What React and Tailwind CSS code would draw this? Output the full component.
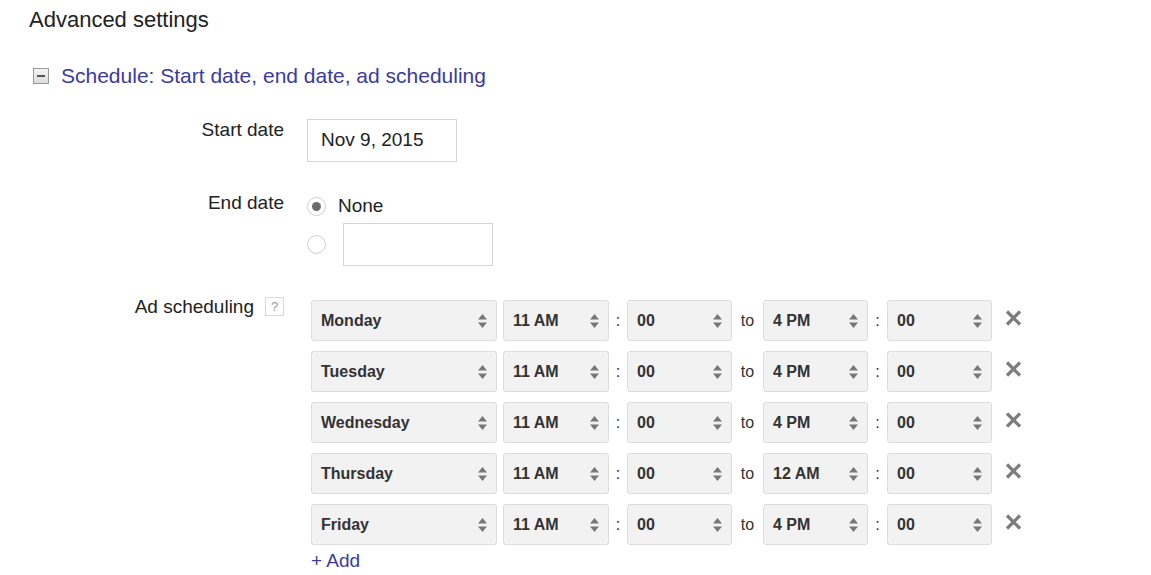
import React from "react";

const font = { fontFamily: '"Liberation Sans", Arial, Helvetica, sans-serif' };

function Arrows() {
  return (
    <svg width="11" height="16" viewBox="0 0 11 16" className="shrink-0">
      <path d="M1 6.5 L5.5 1 L10 6.5 Z" fill="#777" />
      <path d="M1 9.5 L5.5 15 L10 9.5 Z" fill="#777" />
    </svg>
  );
}

function Select({ value, w }) {
  return (
    <div
      className={`${w} h-[41px] shrink-0 flex items-center justify-between pl-[9px] pr-[8px] bg-[#f2f2f2] border border-[#dcdcdc] rounded-[3px] text-[16px] font-bold text-[#333]`}
    >
      <span>{value}</span>
      <Arrows />
    </div>
  );
}

function Colon({ w }) {
  return (
    <div className={`shrink-0 flex items-center justify-center text-[16px] text-[#333] ${w}`}>:</div>
  );
}

function XIcon() {
  return (
    <svg width="17" height="16" viewBox="0 0 17 16" className="shrink-0">
      <path d="M2 1.5 L15 14.5 M15 1.5 L2 14.5" stroke="#7d7d7d" strokeWidth="3.2" />
    </svg>
  );
}

function Row({ day, from, to }) {
  return (
    <div className="flex items-center">
      <Select value={day} w="w-[186px]" />
      <div className="w-[6px] shrink-0" />
      <Select value={from} w="w-[106px]" />
      <Colon w="w-[18px]" />
      <Select value="00" w="w-[105px]" />
      <div className="w-[31px] shrink-0 flex justify-center text-[16px] text-[#333]">to</div>
      <Select value={to} w="w-[105px]" />
      <Colon w="w-[19px]" />
      <Select value="00" w="w-[105px]" />
      <div className="ml-[13px] -mt-[5px]">
        <XIcon />
      </div>
    </div>
  );
}

function Radio({ checked }) {
  return (
    <div className="w-[19px] h-[19px] rounded-full border border-[#cfcfcf] bg-white flex items-center justify-center shrink-0">
      {checked && <div className="w-[9px] h-[9px] rounded-full bg-[#6b6b6b]" />}
    </div>
  );
}

export default function App() {
  const rows = [
    ["Monday", "11 AM", "4 PM"],
    ["Tuesday", "11 AM", "4 PM"],
    ["Wednesday", "11 AM", "4 PM"],
    ["Thursday", "11 AM", "12 AM"],
    ["Friday", "11 AM", "4 PM"],
  ];
  return (
    <div style={font} className="w-[1151px] h-[575px] bg-white overflow-hidden text-[#222]">
      <div className="pl-[29px] pt-[7px] text-[22px] leading-[26px] text-[#222]">Advanced settings</div>

      <div className="flex items-center pl-[33px] mt-[30px] h-[26px]">
        <div className="w-[16px] h-[16px] border border-[#9a9a9a] bg-gradient-to-b from-[#f4f4f4] to-[#dcdcdc] flex items-center justify-center">
          <div className="w-[8px] h-[2px] bg-[#555]" />
        </div>
        <span className="ml-[12px] text-[21px] text-[#3b3b9e]">Schedule: Start date, end date, ad scheduling</span>
      </div>

      {/* Start date */}
      <div className="flex mt-[30px]">
        <div className="w-[284px] text-right text-[19px] leading-[22px] text-[#222]">Start date</div>
        <div className="ml-[23px] w-[150px] h-[43px] border border-[#d5d5d5] flex items-center pl-[13px] text-[19px] text-[#222]">
          Nov 9, 2015
        </div>
      </div>

      {/* End date */}
      <div className="flex mt-[33px]">
        <div className="w-[284px] text-right text-[19px] leading-[22px] -mt-[3px] text-[#222]">End date</div>
        <div className="ml-[23px] flex flex-col">
          <div className="flex items-center h-[22px]">
            <Radio checked />
            <span className="ml-[12px] text-[19px] text-[#222]">None</span>
          </div>
          <div className="flex items-center mt-[6px]">
            <Radio />
            <div className="ml-[17px] w-[150px] h-[43px] border border-[#d5d5d5]" />
          </div>
        </div>
      </div>

      {/* Ad scheduling */}
      <div className="flex mt-[34px]">
        <div className="w-[284px] flex justify-end items-start">
          <span className="text-[19px] leading-[22px] -mt-[4px] text-[#222]">Ad scheduling</span>
          <div className="ml-[11px] -mt-[3px] w-[19px] h-[19px] border border-[#d8d8d8] flex items-center justify-center text-[13px] text-[#9a9a9a]">
            ?
          </div>
        </div>
        <div className="ml-[27px] flex flex-col gap-[10px]">
          {rows.map(([d, f, t]) => (
            <Row key={d} day={d} from={f} to={t} />
          ))}
          <div className="-mt-[5px] text-[19px] text-[#3b3b9e] leading-[22px]">+ Add</div>
        </div>
      </div>
    </div>
  );
}
